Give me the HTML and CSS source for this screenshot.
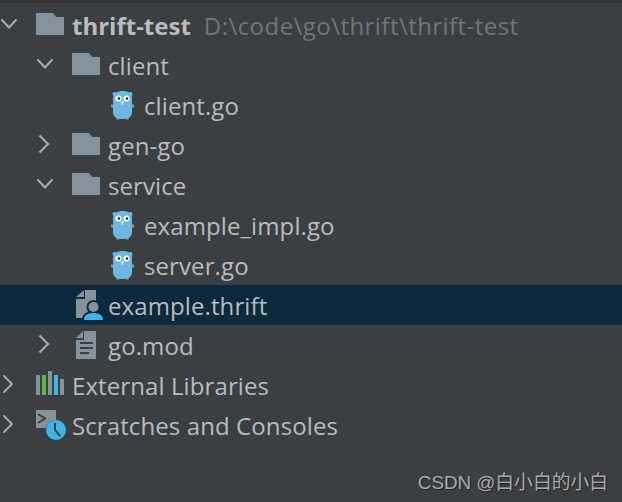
FILE: index.html
```html
<!DOCTYPE html>
<html lang="zh">
<head>
    <meta charset="UTF-8">
    <title>Project tree</title>
    <link rel="stylesheet" href="styles.css">
</head>
<body>
    <svg class="defs" width="0" height="0">
        <symbol id="folder" viewBox="0 0 28 22">
            <path d="M0 0H17L20 4H28V22H0Z" fill="#87939a"/>
        </symbol>
        <symbol id="down" viewBox="0 0 18 12">
            <path d="M1.500 1.500L9 9.500L16.500 1.500" fill="none" stroke="#a9adb0" stroke-width="2"/>
        </symbol>
        <symbol id="right" viewBox="0 0 12 20">
            <path d="M1.500 1.500L10 10L1.500 18.500" fill="none" stroke="#a9adb0" stroke-width="2"/>
        </symbol>
        <symbol id="gopher" viewBox="0 0 24 30">
            <path d="M1 14L3 15V18L1 17ZM24 14L22 15V18L24 17ZM7 27L10 28L8 30L6 29ZM18 27L15 28L17 30L19 29Z" fill="#a98a70"/>
            <path d="M3 8C3 3 7 1 12.500 1S22 3 22 8V22C22 27 18 29 12.500 29S3 27 3 22Z" fill="#6bb8e4"/>
            <circle cx="4.500" cy="4" r="2" fill="#6bb8e4"/>
            <circle cx="20.500" cy="4" r="2" fill="#6bb8e4"/>
            <circle cx="8.500" cy="8.500" r="3" fill="#fff"/>
            <circle cx="16.500" cy="8.500" r="3" fill="#fff"/>
            <circle cx="9" cy="8.500" r="1.300" fill="#222"/>
            <circle cx="17" cy="8.500" r="1.300" fill="#222"/>
            <path d="M11 11H14V13H13.200V15H11.800V13H11Z" fill="#e8dcc8"/>
        </symbol>
        <symbol id="thrift" viewBox="0 0 28 30">
            <path d="M9 0H20V28H0V9H9Z" fill="#87939a"/>
            <path d="M0 7L8 0V7Z" fill="#87939a"/>
            <circle cx="17.500" cy="17" r="7" fill="#0d293e"/>
            <path d="M6 30C6 24 11 21 17.500 21S29 24 29 30Z" fill="#0d293e"/>
            <circle cx="17.500" cy="17" r="5" fill="#87939a"/>
            <path d="M8 30C8 25 12 23 17.500 23S27 25 27 30Z" fill="#3db4e6"/>
        </symbol>
        <symbol id="file" viewBox="0 0 20 28">
            <path d="M8 0H20V28H0V9H8Z" fill="#87939a"/>
            <path d="M0 7L7 0V7Z" fill="#87939a"/>
            <path d="M4 11H17V13H4ZM4 16H17V18H4ZM4 21H13V23H4Z" fill="#3c3f41"/>
        </symbol>
        <symbol id="libs" viewBox="0 0 28 28">
            <path d="M0 4H4V24H0ZM12 0H16V24H12ZM24 8H28V24H24Z" fill="#87939a"/>
            <path d="M6 4H10V24H6Z" fill="#62b543"/>
            <path d="M18 4H22V24H18Z" fill="#40b6e0"/>
        </symbol>
        <symbol id="scratch" viewBox="0 0 30 30">
            <path d="M0 0H20V10A10 10 0 0 0 10 18H0Z" fill="#87939a"/>
            <path d="M2 4L9 8.500L2 13" fill="none" stroke="#3c3f41" stroke-width="2"/>
            <circle cx="20" cy="20" r="10" fill="#3db4e6"/>
            <path d="M19 13V20L24 26" fill="none" stroke="#3c3f41" stroke-width="2"/>
        </symbol>
    </svg>

    <div class="tree">
        <div class="row depth-0">
            <span class="arrow"><svg class="arrow-down"><use href="#down"/></svg></span>
            <svg class="icon icon-folder"><use href="#folder"/></svg>
            <span class="name root">thrift-test</span>
            <span class="path">D:\code\go\thrift\thrift-test</span>
        </div>
        <div class="row depth-1">
            <span class="arrow"><svg class="arrow-down"><use href="#down"/></svg></span>
            <svg class="icon icon-folder"><use href="#folder"/></svg>
            <span class="name">client</span>
        </div>
        <div class="row depth-2">
            <span class="arrow"></span>
            <svg class="icon icon-gopher"><use href="#gopher"/></svg>
            <span class="name">client.go</span>
        </div>
        <div class="row depth-1">
            <span class="arrow"><svg class="arrow-right"><use href="#right"/></svg></span>
            <svg class="icon icon-folder"><use href="#folder"/></svg>
            <span class="name">gen-go</span>
        </div>
        <div class="row depth-1">
            <span class="arrow"><svg class="arrow-down"><use href="#down"/></svg></span>
            <svg class="icon icon-folder"><use href="#folder"/></svg>
            <span class="name">service</span>
        </div>
        <div class="row depth-2">
            <span class="arrow"></span>
            <svg class="icon icon-gopher"><use href="#gopher"/></svg>
            <span class="name">example_impl.go</span>
        </div>
        <div class="row depth-2">
            <span class="arrow"></span>
            <svg class="icon icon-gopher"><use href="#gopher"/></svg>
            <span class="name">server.go</span>
        </div>
        <div class="row depth-1 selected">
            <span class="arrow"></span>
            <svg class="icon icon-thrift"><use href="#thrift"/></svg>
            <span class="name">example.thrift</span>
        </div>
        <div class="row depth-1">
            <span class="arrow"><svg class="arrow-right"><use href="#right"/></svg></span>
            <svg class="icon icon-file"><use href="#file"/></svg>
            <span class="name">go.mod</span>
        </div>
        <div class="row depth-0">
            <span class="arrow"><svg class="arrow-right"><use href="#right"/></svg></span>
            <svg class="icon icon-libs"><use href="#libs"/></svg>
            <span class="name">External Libraries</span>
        </div>
        <div class="row depth-0">
            <span class="arrow"><svg class="arrow-right"><use href="#right"/></svg></span>
            <svg class="icon icon-scratch"><use href="#scratch"/></svg>
            <span class="name">Scratches and Consoles</span>
        </div>
    </div>

    <div class="watermark">CSDN @白小白的小白</div>
</body>
</html>
```

FILE: styles.css
```css
html, body {
    height: 100%;
}
body {
    margin: 0;
    background: #3c3f41;
    color: #b8bcbe;
    font-family: "Open Sans", "Noto Sans", sans-serif;
    font-size: 24px;
    overflow: hidden;
    display: flex;
    flex-direction: column;
}
.defs {
    position: absolute;
}
.tree {
    border-top: 3px solid #323232;
    padding-top: 2px;
    flex: 1;
}
.row {
    display: flex;
    align-items: center;
    height: 40px;
    white-space: nowrap;
}
.depth-0 {
    padding-left: 0;
}
.depth-1 {
    padding-left: 36px;
}
.depth-2 {
    padding-left: 72px;
}
.selected {
    background: #0d293e;
}
.arrow {
    width: 36px;
    flex: none;
    display: flex;
    align-items: center;
}
.arrow-down {
    width: 18px;
    height: 12px;
    margin-bottom: 3px;
}
.arrow-right {
    width: 12px;
    height: 20px;
    margin-left: 2px;
    margin-bottom: 2px;
}
.icon {
    flex: none;
    margin-right: 8px;
}
.icon-folder {
    width: 28px;
    height: 22px;
    margin-bottom: 2px;
}
.icon-gopher {
    width: 24px;
    height: 30px;
    margin-left: 2px;
    margin-right: 10px;
}
.icon-thrift {
    width: 28px;
    height: 30px;
    margin-left: 4px;
    margin-right: 4px;
}
.icon-file {
    width: 20px;
    height: 28px;
    margin-left: 4px;
    margin-right: 12px;
}
.icon-libs {
    width: 28px;
    height: 28px;
}
.icon-scratch {
    width: 30px;
    height: 30px;
    margin-right: 6px;
}
.name {
    letter-spacing: 0.1px;
}
.root {
    font-weight: 700;
    letter-spacing: 0;
}
.path {
    color: #727577;
    margin-left: 13px;
    letter-spacing: 0.45px;
}
.watermark {
    color: #a8abad;
    font-family: "Liberation Sans", "Noto Sans CJK SC", sans-serif;
    font-size: 18.8px;
    text-align: right;
    text-shadow: 1px 1px 1px #222;
    padding: 0 14px 8px 0;
}
```
